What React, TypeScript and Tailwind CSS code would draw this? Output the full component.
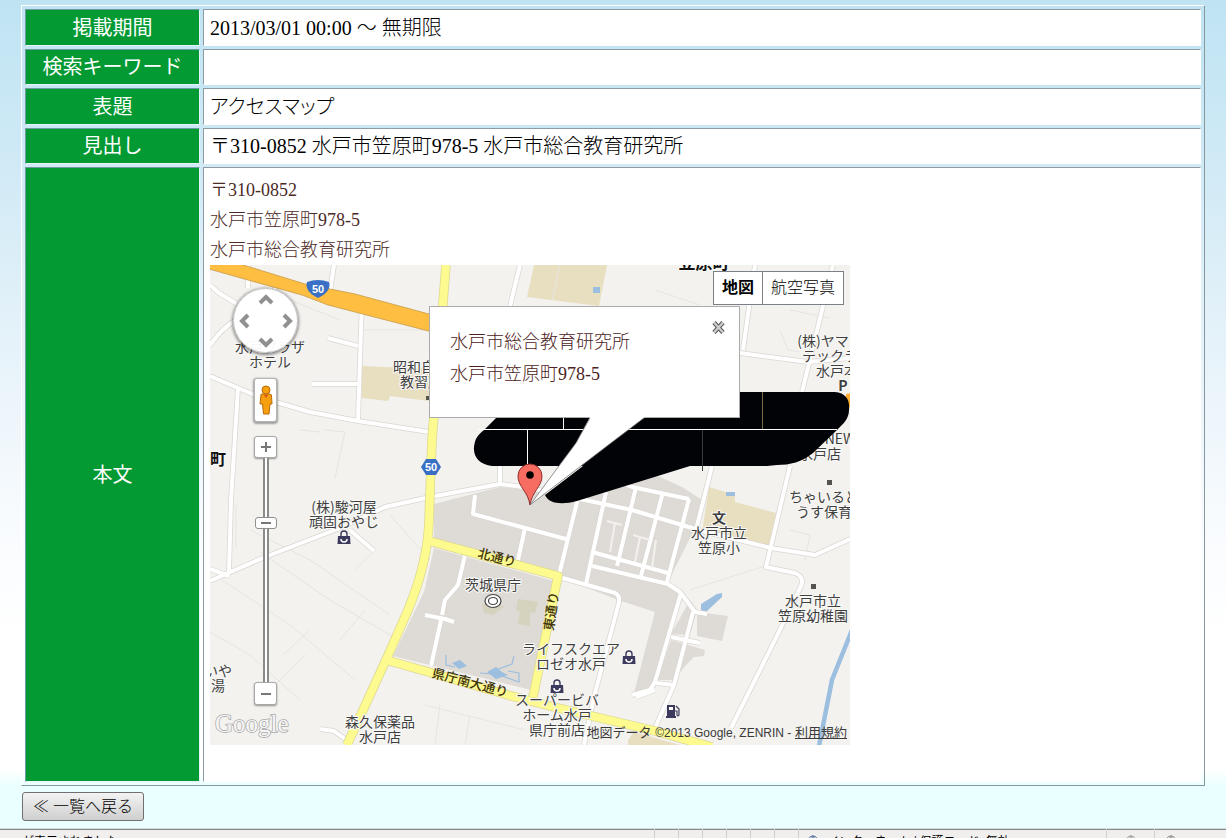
import React from "react";
import { Globe } from "lucide-react";

type RowProps = {
  label: string;
  children?: React.ReactNode;
  tall?: boolean;
};

const Row: React.FC<RowProps> = ({ label, children, tall }) => (
  <tr className="odd:h-[37px] even:h-[36px]">
    <th
      scope="row"
      className="w-[175px] border border-t-[#6f9aa0] border-r-[#e6f3fa] border-b-[#e6f3fa] border-l-[#6f9aa0] bg-[#039933] text-center align-middle text-xl leading-[30px] font-normal text-white"
    >
      {label}
    </th>
    <td
      className={
        tall
          ? "border border-t-[#8e9ba3] border-r-white border-b-white border-l-[#8e9ba3] bg-white px-1.5 pt-[7px] pb-9 align-top"
          : "border border-t-[#8e9ba3] border-r-white border-b-white border-l-[#8e9ba3] bg-white px-1.5 align-middle text-xl leading-[30px] font-light text-black"
      }
    >
      {children}
    </td>
  </tr>
);

type Label = { x: number; y: number; lines: string[] };

const labels: Label[] = [
  { x: 270, y: 352, lines: ["水戸プラザ", "ホテル"] },
  { x: 421, y: 372, lines: ["昭和自動", "教習所"] },
  { x: 344, y: 512, lines: ["(株)駿河屋", "頑固おやじ"] },
  { x: 493, y: 590, lines: ["茨城県庁"] },
  { x: 571, y: 654, lines: ["ライフスクエア", "ロゼオ水戸"] },
  { x: 557, y: 705, lines: ["スーパービバ", "ホーム水戸", "県庁前店"] },
  { x: 380, y: 727, lines: ["森久保薬品", "水戸店"] },
  { x: 719, y: 538, lines: ["水戸市立", "笠原小"] },
  { x: 813, y: 606, lines: ["水戸市立", "笠原幼稚園"] },
  { x: 824, y: 502, lines: ["ちゃいるど"] },
  { x: 831, y: 517, lines: ["うす保育園"] },
  { x: 837, y: 346, lines: ["(株)ヤマイチ"] },
  { x: 844, y: 361, lines: ["テックランド", "水戸本店"] },
  { x: 218, y: 676, lines: ["いや", "湯"] },
];

const majorRoads = [
  "M446 265 L432 440 L429 520 Q428 562 408 610 L386 660 L347 745",
  "M429 541 L558 576 L533 697",
  "M386 660 L425 671 L508 695 L558 708 L655 731 L712 747",
];

const minorRoads = [
  "M248 265 V288 M275 286 V300",
  "M210 285 L219 293 L237 304",
  "M210 345 Q222 328 236 320",
  "M334 265 L330 292",
  "M362 300 L358 420",
  "M328 338 L358 346 M312 384 H358",
  "M210 376 L238 388 L262 398 L310 412 L358 421 L429 432",
  "M238 388 L231 500 L229 572",
  "M210 581 L265 557 L340 528 L385 507 L430 497 L500 484 L530 488 L575 498",
  "M350 530 L374 551",
  "M210 569 L229 576 M320 729 L334 731 L345 739",
  "M520 265 L510 306",
  "M500 466 V485 M475 495 L473 514 L566 539",
  "M525 528 L518 560",
  "M578 498 L559 575",
  "M606 492 L586 584",
  "M636 487 L617 566",
  "M663 492 L641 576",
  "M689 499 L667 582",
  "M580 499 L632 510 L702 531 L771 548 L815 555 L850 539",
  "M608 478 L632 487 L689 499",
  "M592 552 L668 573 M592 566 L668 584 L680 592 L695 612 L707 614",
  "M559 577 L612 592 Q622 594 618 606 L594 697 L584 745",
  "M681 593 L655 682 L650 690 L632 695",
  "M693 612 L674 685 L656 683 M671 637 L700 643",
  "M674 685 L655 728",
  "M712 466 L696 530",
  "M790 466 L766 567 L795 573 Q806 578 800 588 L775 640 L731 728",
  "M755 265 L743 350",
  "M833 265 L802 392 M740 353 L808 362 L850 358",
  "M425 615 L445 619 L454 622",
  "M441 620 L431 666",
  "M465 555 L458 585 L445 600 L442 615",
  "M636 697 L655 690",
];

const faintLines = [
  "M236 505 L236 548 M250 530 L310 560 L390 615 M260 552 L330 600 L392 636",
  "M222 580 L290 625 L355 680 M210 632 L250 655 L300 700",
  "M283 655 L310 630 M270 690 L305 655 M340 640 L365 610",
  "M325 430 L345 432 L335 478 M300 430 L320 432",
  "M390 515 L430 560 M355 570 L375 550",
  "M425 705 L525 730 M440 705 L435 745 M470 715 L465 745",
  "M655 290 L700 305 M660 340 L735 355 M645 380 L740 388",
  "M690 590 L765 566 M790 530 L810 535 L805 560",
  "M365 330 H429 M290 300 L340 320 M560 265 L552 300",
  "M790 310 L830 318 M780 330 L788 350 L800 352",
];

const Bag = ({ x, y }: { x: number; y: number }) => (
  <g transform={`translate(${x} ${y})`}>
    <path d="M-3 -1 V-4 A3 3 0 0 1 3 -4 V-1" fill="none" stroke="#3c3a5c" strokeWidth="1.4" />
    <path d="M-6 -2 H6 L6.500 6 H-6.500 Z" fill="#3c3a5c" />
    <path d="M-3 1 A3 3 0 0 0 3 1" fill="none" stroke="#fff" strokeWidth="1.500" />
  </g>
);

const MapCanvas = () => (
  <svg
    viewBox="210 265 640 480"
    className="block h-full w-full font-['Noto_Sans_CJK_JP',sans-serif]"
    role="img"
    aria-label="水戸市総合教育研究所 周辺地図"
  >
    <rect x="210" y="265" width="641" height="480" fill="#f3f2ef" />

    {/* city blocks */}
    <g fill="#dedad5">
      <path d="M434 504 L500 487 L545 491 L640 468 L682 487 L702 500 L694 530 L667 584 L682 594 L655 688 L633 697 L655 612 L618 600 L562 578 L434 542 Z" />
      <path d="M434 548 L554 581 L531 690 L393 656 L424 592 Z" />
      <path d="M697 612 L728 616 L722 641 L697 636 Z M690 600 L697 610 L690 635 L671 634 Z" />
      <path d="M671 640 L705 650 L704 656 L694 657 L686 665 L674 680 L657 680 Z" />
    </g>
    <g fill="#e8dec0">
      <path d="M534 265 H607 L599 306 L527 297 Z" />
      <path d="M362 366 L429 369 V401 L390 396 L388 401 L362 398 Z" />
      <path d="M709 487 L735 495 V502 L776 513 L771 546 L702 532 Z" />
      <path d="M628 740 L634 732 L680 745 H628 Z" />
    </g>
    <path d="M518 599 L538 602 L535 613 L530 612 L530 626 L518 624 L520 612 L516 610 Z M482 604 L505 606 L493 615 L484 613 Z" fill="#d5d2be" />

    {/* water */}
    <g fill="#9cbedf">
      <path d="M701 604 L717 594 L722 593 L722 597 L707 611 L701 612 Z" />
      <path d="M452 663 L460 660 L467 666 L459 669 Z M487 672 L496 667 L502 672 L508 675 L496 679 Z M593 287 H600 V293 H593 Z M726 492 H735 V496 H726 Z" />
    </g>
    <path d="M446 655 V665 L455 667 M480 673 L492 674 M496 670 L512 664 L514 656 M502 676 L519 682 V673 L508 671" fill="none" stroke="#9cbedf" strokeWidth="1.200" />
    <path d="M852 630 L832 680 L819 746" fill="none" stroke="#9cbedf" strokeWidth="4.500" />

    <g fill="none" stroke="#e7e5e1" strokeWidth="1">
      {faintLines.map((d) => (
        <path key={d} d={d} />
      ))}
    </g>
    <g fill="none" strokeLinejoin="round" stroke="#dad7d2" strokeWidth="5.500">
      {minorRoads.map((d) => (
        <path key={d} d={d} />
      ))}
    </g>
    <g fill="none" strokeLinejoin="round" stroke="#fff" strokeWidth="4">
      {minorRoads.map((d) => (
        <path key={d} d={d} />
      ))}
      <path d="M607 521 L622 525 M633 535 L650 540 M615 523 L610 552 M640 537 L635 562 M656 540 L652 568" strokeWidth="2" stroke="#f3f1ee" />
    </g>
    <g fill="none" strokeLinejoin="round" stroke="#dcd893" strokeWidth="9.500">
      {majorRoads.map((d) => (
        <path key={d} d={d} />
      ))}
    </g>
    <g fill="none" strokeLinejoin="round" stroke="#fdfa8f" strokeWidth="8">
      {majorRoads.map((d) => (
        <path key={d} d={d} />
      ))}
    </g>
    <path
      d="M209 264 H240 L305 284 L335 290 L355 294 L440 317 V334 L328 305 L302 295 L248 280 L209 269 Z"
      fill="#fdbe42"
      stroke="#c99a45"
      strokeWidth="0.800"
    />
    <path d="M846 394 L852 393 V408 L846 406 Z" fill="#fdae32" />

    {/* route shields */}
    <path d="M307 282 Q318 278 329 282 Q332 291 318 298 Q304 291 307 282 Z" fill="#3a6fc6" />
    <path d="M426 459 H436 L441 467 L436 475 H426 L421 467 Z" fill="#3a6fc6" />
    <g fill="#fff" fontSize="11" fontWeight="bold" textAnchor="middle" className="font-['Liberation_Sans',sans-serif]">
      <text x="318" y="293">50</text>
      <text x="431" y="471">50</text>
    </g>

    {/* place names */}
    <g fontSize="14" textAnchor="middle" fill="#3f3f3f" stroke="#f8f8f6" strokeWidth="2" paintOrder="stroke">
      {labels.map(({ x, y, lines }) =>
        lines.map((line, i) => (
          <text key={line} x={x} y={y + i * 15}>
            {line}
          </text>
        )),
      )}
      <text x="840" y="444">NEW</text>
      <text x="820" y="459">水戸店</text>
      <text x="719" y="523" fontWeight="bold">文</text>
      <text x="843" y="391" fontWeight="bold">P</text>
      <text x="218" y="465" fontSize="16" fontWeight="bold" fill="#111">町</text>
      <text x="704" y="269" fontSize="17" fontWeight="bold" fill="#111">笠原町</text>
    </g>
    <g fontSize="13" fontWeight="500" textAnchor="middle" fill="#40340a">
      <text transform="translate(496 562) rotate(14)">北通り</text>
      <text transform="translate(556 612) rotate(-82)">東通り</text>
      <text transform="translate(469 687) rotate(15)">県庁南大通り</text>
    </g>
    <g fill="#55534c">
      <rect x="827" y="480" width="5" height="5" />
      <rect x="811" y="584" width="5" height="5" />
      <rect x="426" y="396" width="4" height="4" />
    </g>
    <g fill="#fff" stroke="#444" strokeWidth="1.200">
      <ellipse cx="493" cy="601" rx="8" ry="6.500" />
      <ellipse cx="493" cy="601" rx="4.500" ry="3.500" />
    </g>
    <Bag x={344} y={538} />
    <Bag x={629} y={658} />
    <Bag x={557} y={687} />
    <g fill="#3c3a5c">
      <path d="M667 705 H675 V716 H676 V718 H666 V716 H667 Z" />
      <path d="M669 707 H673 V710 H669 Z" fill="#fff" />
      <path d="M675 711 H677 V715 Q678 717 679 715 V709 L676 706" fill="none" stroke="#3c3a5c" strokeWidth="1.200" />
    </g>

    {/* scribbled-out area */}
    <path
      d="M497 417 L525 392 H835 C846 393 850 400 849 410 C849 419 843 424 837 430 L813 453 C802 462 790 465 777 465 L767 466 H690 L577 501 C562 505 549 504 545 495 L583 466 H492 C480 465 473 457 474 447 C475 438 478 435 484 430 Z"
      fill="#020306"
    />
    <g fill="none" stroke="#fff" strokeWidth="1" shapeRendering="crispEdges">
      <path d="M478 429.500 H837 M563.500 417 V429 M527.500 430 V466" />
      <path d="M762.500 392 V429" stroke="#7a6a45" />
      <path d="M702.500 430 V471" stroke="#3a3a3a" />
    </g>

    {/* marker */}
    <path d="M530 505 C528 491 518 487 518 476 A12 12 0 0 1 542 476 C542 487 532 491 530 505 Z" fill="#f76d62" stroke="#8c2f2c" strokeWidth="1" />
    <circle cx="530" cy="475" r="3.800" fill="#000" />

    <text
      x="215"
      y="732"
      fontSize="25"
      fill="#f6f6f6"
      stroke="#a8a8a8"
      strokeWidth="1.500"
      paintOrder="stroke"
      className="font-['Liberation_Serif',serif]"
    >
      Google
    </text>
  </svg>
);

const panButtons = [
  { name: "北へ移動", cell: "col-start-2 row-start-1", d: "M2 11 L8 5 L14 11" },
  { name: "西へ移動", cell: "col-start-1 row-start-2", d: "M11 2 L5 8 L11 14" },
  { name: "東へ移動", cell: "col-start-3 row-start-2", d: "M5 2 L11 8 L5 14" },
  { name: "南へ移動", cell: "col-start-2 row-start-3", d: "M2 5 L8 11 L14 5" },
];

const MapControls = () => (
  <div className="absolute top-[23px] left-[23px] flex w-[65px] flex-col items-center">
    <div className="grid size-[65px] grid-cols-3 grid-rows-3 rounded-full border border-[#c4c4c4] bg-white/95 shadow-[0_1px_3px_1px_rgba(0,0,0,0.45)]">
      {panButtons.map((b) => (
        <button key={b.name} type="button" aria-label={b.name} className={`${b.cell} flex items-center justify-center`}>
          <svg viewBox="0 0 16 16" className="size-4" fill="none" stroke="#909090" strokeWidth="4">
            <path d={b.d} />
          </svg>
        </button>
      ))}
    </div>
    <button
      type="button"
      aria-label="ストリートビュー"
      className="mt-[25px] flex h-11 w-[23px] items-center justify-center rounded-[3px] border border-[#b5b5b5] bg-white shadow-[0_1px_2px_1px_rgba(0,0,0,0.35)]"
    >
      <svg viewBox="0 0 14 30" className="h-[30px] w-3.5" fill="#f5a00c" stroke="#b9690b" strokeWidth="1">
        <path d="M2 10 Q1 9 4 9 H10 Q13 9 12.500 11 L13 19 H11 L10 29 H4.500 L3.500 19 H1 Z" />
        <circle cx="7" cy="5" r="4" />
        <path d="M5 10 L7 13 L9 10" fill="#e0501c" stroke="none" />
      </svg>
    </button>
    <button
      type="button"
      aria-label="ズームイン"
      className="mt-3.5 flex h-[22px] w-[23px] items-center justify-center rounded-[3px] border border-[#a8a8a8] bg-white shadow-[0_1px_2px_rgba(0,0,0,0.4)]"
    >
      <svg viewBox="0 0 12 12" className="size-3" stroke="#777" strokeWidth="2">
        <path d="M1 6 H11 M6 1 V11" />
      </svg>
    </button>
    <input
      type="range"
      aria-label="ズーム"
      min={0}
      max={18}
      defaultValue={13}
      className="h-56 w-[22px] appearance-none bg-transparent [direction:rtl] [writing-mode:vertical-lr] [&::-webkit-slider-runnable-track]:h-full [&::-webkit-slider-runnable-track]:w-full [&::-webkit-slider-runnable-track]:bg-[linear-gradient(90deg,transparent_8px,#8b8b8b_8px,#8b8b8b_10px,#fff_10px,#fff_12px,#8b8b8b_12px,#8b8b8b_14px,transparent_14px)] [&::-webkit-slider-thumb]:h-3 [&::-webkit-slider-thumb]:w-[22px] [&::-webkit-slider-thumb]:appearance-none [&::-webkit-slider-thumb]:rounded-[3px] [&::-webkit-slider-thumb]:border [&::-webkit-slider-thumb]:border-[#8f8f8f] [&::-webkit-slider-thumb]:bg-[linear-gradient(#777,#777)] [&::-webkit-slider-thumb]:bg-[length:10px_2px] [&::-webkit-slider-thumb]:bg-center [&::-webkit-slider-thumb]:bg-no-repeat [&::-webkit-slider-thumb]:bg-white"
    />
    <button
      type="button"
      aria-label="ズームアウト"
      className="flex h-[23px] w-[23px] items-center justify-center rounded-[3px] border border-[#a8a8a8] bg-white shadow-[0_1px_2px_rgba(0,0,0,0.4)]"
    >
      <svg viewBox="0 0 12 12" className="size-3" stroke="#777" strokeWidth="2">
        <path d="M1 6 H11" />
      </svg>
    </button>
  </div>
);

const AccessMap = () => (
  <div className="relative h-[480px] w-[640px] overflow-hidden">
    <MapCanvas />
    <MapControls />

    <div className="absolute top-1.5 right-1.5 flex border border-[#7b7f86] bg-white text-base leading-8 text-black">
      <button type="button" className="border-r border-[#7b7f86] px-2 font-bold">地図</button>
      <button type="button" className="px-2 font-light">航空写真</button>
    </div>

    <div className="absolute top-[41px] left-[219px] h-[112px] w-[311px] border border-[#ababab] bg-white px-5 pt-[19px] text-lg leading-8 font-light text-[#4c2222]">
      <p>水戸市総合教育研究所</p>
      <p>水戸市笠原町978-5</p>
      <button type="button" aria-label="閉じる" className="absolute top-3.5 right-3.5">
        <svg viewBox="0 0 13 13" className="size-[13px]" fill="none">
          <path d="M2 1.500 L11 11.500 M11 1.500 L2 11.500" stroke="#555" strokeWidth="4.500" />
          <path d="M2 1.500 L11 11.500 M11 1.500 L2 11.500" stroke="#ccc" strokeWidth="2.500" />
        </svg>
      </button>
      <svg viewBox="530 417 116 89" className="absolute top-[110px] left-[100px] h-[89px] w-[116px]" aria-hidden="true">
        <path d="M590 417 L576 443 L530 505 L607 446 L645 417 Z" fill="#fff" />
        <path d="M590 418 L576 443 L530 505 L607 446 L644 418" fill="none" stroke="#777" strokeWidth="0.800" />
      </svg>
    </div>

    <p className="absolute right-0 bottom-0 pr-[3px] font-['Liberation_Sans','Noto_Sans_CJK_JP',sans-serif] text-[13px] leading-6 text-[#3a3a3a]">
      地図データ <span className="text-xs">©2013 Google, ZENRIN -</span>{" "}
      <a href="#terms" className="underline">利用規約</a>
    </p>
  </div>
);

const StatusBar = () => (
  <footer className="mt-auto flex h-[10px] items-start overflow-hidden border-t border-[#d5dcdc] bg-[#f1efee] text-xs leading-3 text-black shadow-[inset_0_1px_0_#85888b] font-['Noto_Sans_CJK_JP',sans-serif]">
    <span className="w-[654px] shrink-0 pt-1.5 pl-[22px]">が表示されました</span>
    {[1, 2, 3, 4, 5, 6].map((n) => (
      <span key={n} className="h-full w-6 shrink-0 border-l border-[#d0d0d0]" />
    ))}
    <span className="flex h-full flex-1 items-start gap-2 border-l border-[#d0d0d0] pt-1.5 pl-2">
      <Globe className="size-3 shrink-0 text-[#4a6a9c]" />
      <span className="whitespace-nowrap">インターネット | 保護モード: 無効</span>
    </span>
    <span className="flex h-full w-12 shrink-0 justify-center border-l border-[#d0d0d0] pt-1.5">
      <Globe className="size-3 text-[#999]" />
    </span>
    <span className="h-full w-[72px] shrink-0 border-l border-[#d0d0d0] pt-1.5 pl-2.5">
      <Globe className="size-3 text-[#888]" />
    </span>
  </footer>
);

const App: React.FC = () => {
  return (
    <div
      lang="ja"
      className="flex min-h-screen flex-col bg-[#eaffff] bg-[linear-gradient(#bfe3f3_0px,#cbe8f5_120px,#e3f1f9_320px,#f8fbfe_520px,#ffffff_640px,#ffffff_770px,#eaffff_785px)] font-['Liberation_Serif','Noto_Sans_CJK_JP',serif]"
    >
      <main className="px-[21px] pt-[5px]">
        <table className="w-full border-separate border-spacing-[3px] border border-t-white border-r-[#87989c] border-b-[#87989c] border-l-white">
          <tbody>
            <Row label="掲載期間">2013/03/01 00:00 ～ 無期限</Row>
            <Row label="検索キーワード" />
            <Row label="表題">
              <span className="[font-feature-settings:'palt']">アクセスマップ</span>
            </Row>
            <Row label="見出し">〒310-0852 水戸市笠原町978-5 水戸市総合教育研究所</Row>
            <Row label="本文" tall>
              <div className="text-lg leading-[30px] font-light text-[#4c2a26]">
                <p>〒310-0852</p>
                <p>水戸市笠原町978-5</p>
                <p>水戸市総合教育研究所</p>
              </div>
              <AccessMap />
            </Row>
          </tbody>
        </table>
        <button
          type="button"
          className="mt-1.5 ml-px block h-[29px] rounded-[3px] border border-[#707070] bg-linear-to-b from-[#f3f3f3] to-[#cfcfcf] px-2.5 text-base leading-[26px] font-light text-black"
        >
          ≪ 一覧へ戻る
        </button>
      </main>
      <StatusBar />
    </div>
  );
};

export default App;
